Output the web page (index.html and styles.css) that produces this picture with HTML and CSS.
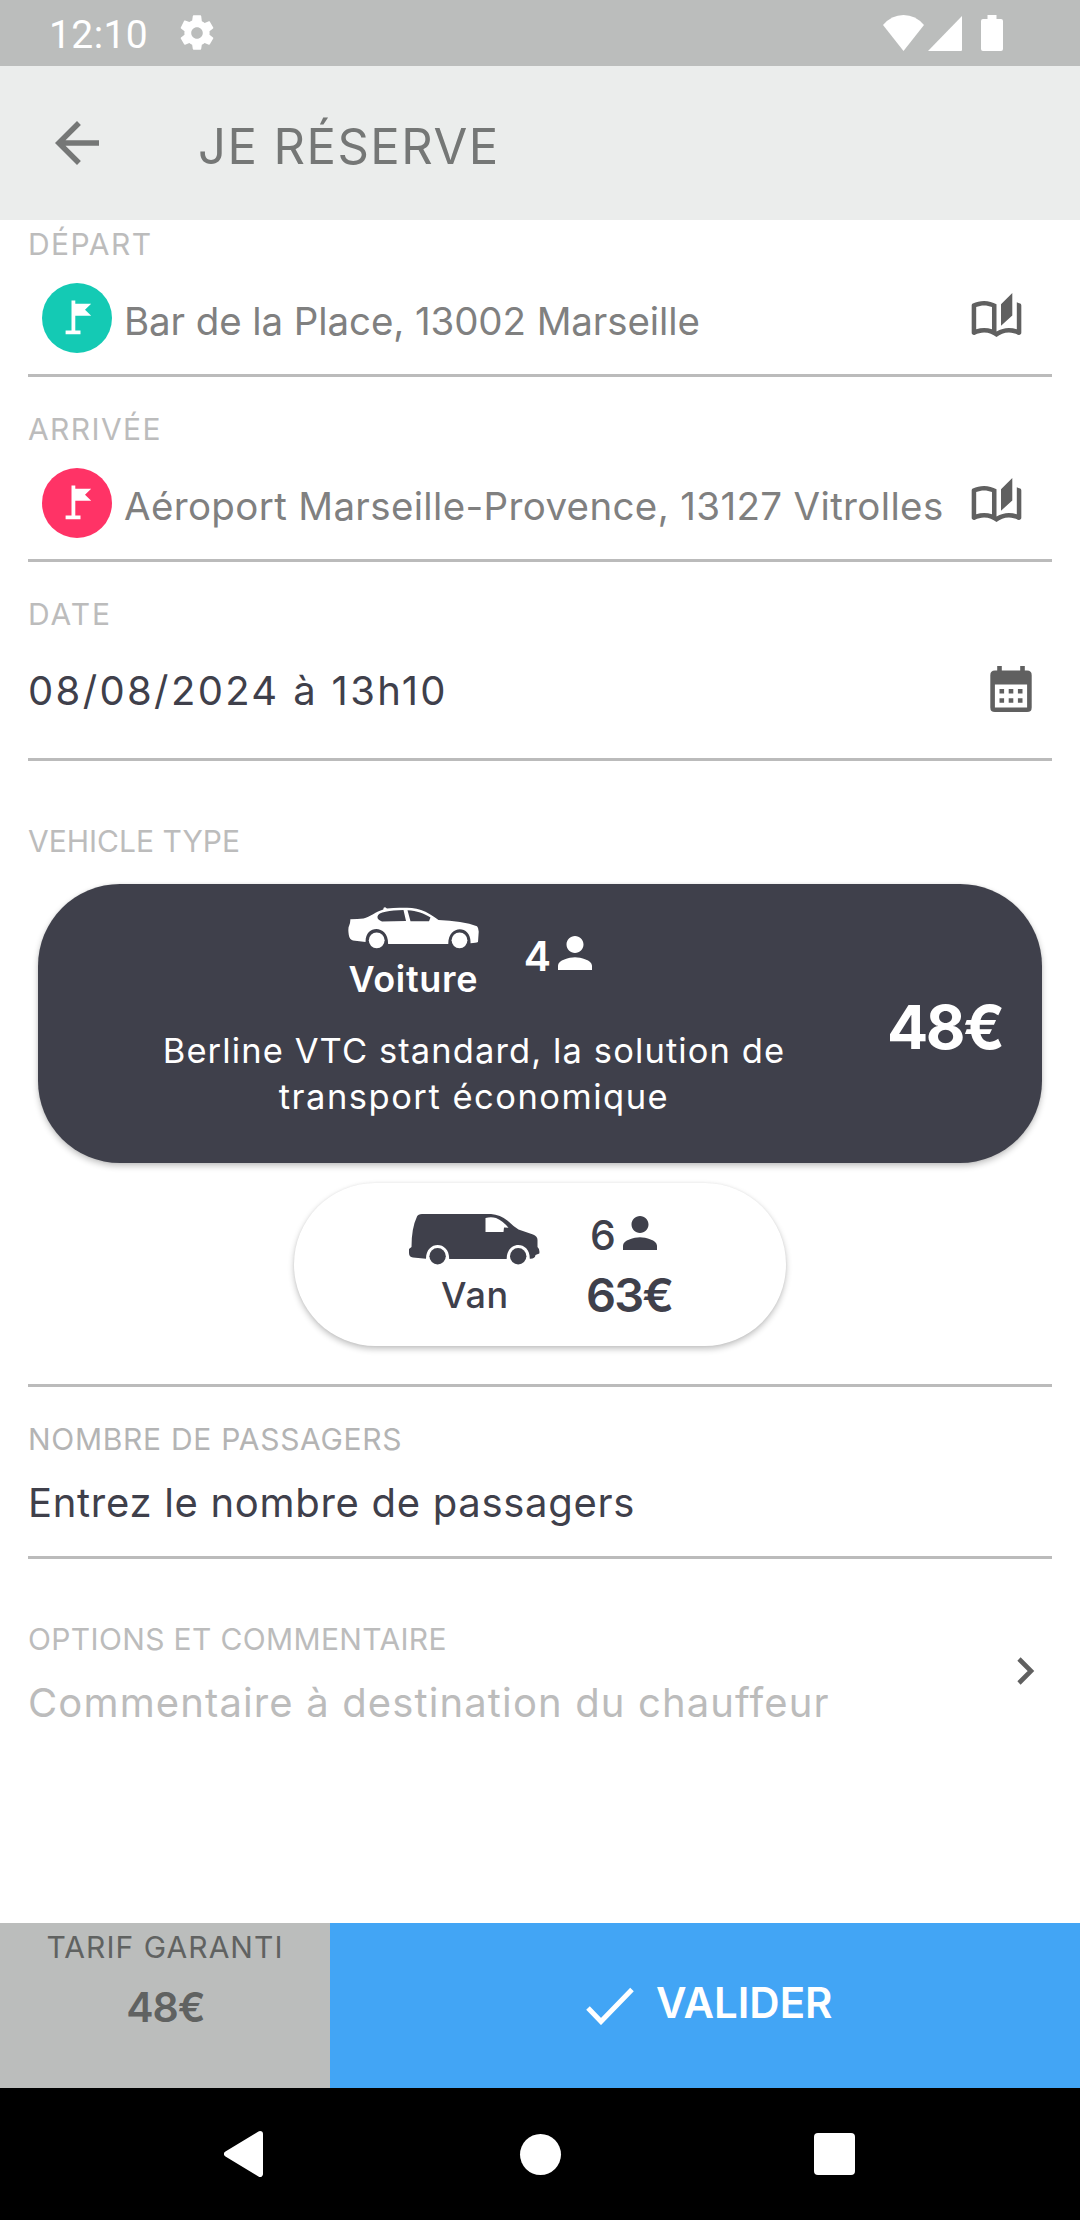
FILE: index.html
```html
<!DOCTYPE html>
<html lang="fr">
<head>
<meta charset="utf-8">
<title>Je réserve</title>
<link rel="stylesheet" href="styles.css">
</head>
<body>
<svg class="defs" width="0" height="0" aria-hidden="true">
  <symbol id="person" viewBox="4 4 16 16"><path d="M12 12c2.21 0 4-1.79 4-4s-1.79-4-4-4-4 1.79-4 4 1.79 4 4 4zm0 2c-2.67 0-8 1.34-8 4v2h16v-2c0-2.66-5.33-4-8-4z"/></symbol>
  <symbol id="book" viewBox="1 .5 22 19.5"><path d="M22.47 5.2c-.47-.24-.96-.44-1.47-.61v12.03c-1.14-.41-2.31-.62-3.5-.62-1.9 0-3.78.54-5.5 1.58V5.48C10.38 4.55 8.51 4 6.5 4c-1.79 0-3.48.44-4.97 1.2-.33.16-.53.51-.53.88v12.08c0 .58.47.99 1 .99.16 0 .32-.04.48-.12C3.69 18.4 5.05 18 6.5 18c2.07 0 3.98.82 5.5 2 1.52-1.18 3.43-2 5.5-2 1.45 0 2.81.4 4.02 1.04.16.08.32.12.48.12.52 0 1-.41 1-.99V6.08c0-.37-.2-.72-.53-.88zM10 16.62C8.86 16.21 7.69 16 6.5 16s-2.36.21-3.5.62V6.71C4.11 6.24 5.28 6 6.5 6c1.2 0 2.39.25 3.5.72v9.9zM19 .5l-5 5V15l5-4.5V.5z"/></symbol>
  <symbol id="flag" viewBox="-35 -35 70 70"><path d="M-5.5-17.5h3.8v3.2H14.2L8-8.2 14.2-2.3H-1.7V12.5H3.5v3.8H-11.4V12.5h5.9z"/></symbol>
</svg>

<header class="status">
  <span class="clock">12:10</span>
  <svg class="gear" width="42" height="42" viewBox="0 0 24 24"><path d="M19.14 12.94c.04-.3.06-.61.06-.94 0-.32-.02-.64-.07-.94l2.03-1.58c.18-.14.23-.41.12-.61l-1.92-3.32c-.12-.22-.37-.29-.59-.22l-2.39.96c-.5-.38-1.03-.7-1.62-.94L14.4 2.3c-.04-.24-.24-.41-.48-.41h-3.84c-.24 0-.43.17-.47.41l-.36 2.54c-.59.24-1.13.57-1.62.94l-2.39-.96c-.22-.08-.47 0-.59.22L2.74 8.87c-.12.21-.08.47.12.61l2.03 1.58c-.05.3-.09.63-.09.94s.02.64.07.94l-2.03 1.58c-.18.14-.23.41-.12.61l1.92 3.32c.12.22.37.29.59.22l2.39-.96c.5.38 1.03.7 1.62.94l.36 2.54c.05.24.24.41.48.41h3.84c.24 0 .44-.17.47-.41l.36-2.54c.59-.24 1.13-.56 1.62-.94l2.39.96c.22.08.47 0 .59-.22l1.92-3.32c.12-.22.07-.47-.12-.61l-2.01-1.58zM12 15.3c-1.82 0-3.3-1.48-3.3-3.3s1.48-3.3 3.3-3.3 3.3 1.48 3.3 3.3-1.48 3.3-3.3 3.3z"/></svg>
  <div class="signals">
    <svg width="41" height="36" viewBox="0 0 41 36"><path d="M0 10Q8.500 0 20.500 0T41 10L20.500 36z"/></svg>
    <svg class="cell" width="34" height="35" viewBox="0 0 34 35"><path d="M0 35L34 0V34Q34 35 33 35z"/></svg>
    <svg width="22" height="36" viewBox="0 0 22 36"><path d="M6.500 0h9v4H20q2 0 2 2V34q0 2-2 2H2q-2 0-2-2V6q0-2 2-2h4.500z"/></svg>
  </div>
</header>

<div class="appbar">
  <svg width="44" height="44" viewBox="4 4 16 16"><path d="M20 11H7.830l5.590-5.590L12 4l-8 8 8 8 1.410-1.410L7.830 13H20v-2z"/></svg>
  <h1 class="title">JE RÉSERVE</h1>
</div>

<main class="form">
  <section class="field">
    <div class="label">DÉPART</div>
    <div class="row">
      <svg class="pin pin-start"><use href="#flag"/></svg>
      <span class="address address-start">Bar de la Place, 13002 Marseille</span>
      <svg class="book"><use href="#book"/></svg>
    </div>
  </section>
  <section class="field">
    <div class="label arrival">ARRIVÉE</div>
    <div class="row">
      <svg class="pin pin-end"><use href="#flag"/></svg>
      <span class="address address-end">Aéroport Marseille-Provence, 13127 Vitrolles</span>
      <svg class="book"><use href="#book"/></svg>
    </div>
  </section>
  <section class="field">
    <div class="label date-label">DATE</div>
    <div class="row date-row">
      <span class="value date">08/08/2024 à 13h10</span>
      <svg class="calendar" width="42" height="46" viewBox="3 1 18 20"><path fill-rule="evenodd" d="M6 1h2v2h8V1h2v2h1q2 0 2 2v14q0 2-2 2H5q-2 0-2-2V5q0-2 2-2h1zM5 9v10h14V9zM7 11h2v2H7zM11 11h2v2h-2zM15 11h2v2h-2zM7 15h2v2H7zM11 15h2v2h-2zM15 15h2v2h-2z"/></svg>
    </div>
  </section>

  <section class="vehicles">
    <div class="label vehicle-label">VEHICLE TYPE</div>
    <div class="card selected">
      <div class="details">
        <div class="summary">
          <div class="model">
            <svg width="131" height="42" viewBox="0 0 131 42"><path fill-rule="evenodd" d="M2.300 12.300Q10 12.200 15.500 11.500C22 9.500 28 4.600 35.300 2.400Q35.200 0 37.200.2L39 1.500Q47 .6 54 .8C61 .8 67 1 73 2.900C79 4.800 85 9 90.500 13Q102 13.300 112 15Q122 16.500 129 19.300Q130.800 21 130.700 25L130 35Q128 36 122.500 36.200C123.500 17.500 100 17.500 100.300 36.900H40.100C40.500 17.500 17 17.500 17.600 35L5 33.500Q1.500 32.500.8 28Q-.3 21 1.200 18.500Q2.500 15 2.300 12.300zM29.500 9.500C30 5 42 3.200 55.500 3L58 14L34 14.500Q29 13 29.500 9.500zM59.500 3.200C69 3.500 76 6.500 82.500 10.500L81 14.300H62.500z"/><circle cx="28.700" cy="33.300" r="7.900"/><circle cx="111.500" cy="33.300" r="7.900"/></svg>
            <span class="name">Voiture</span>
          </div>
          <div class="pax"><span class="count">4</span><svg class="person"><use href="#person"/></svg></div>
        </div>
        <p class="description">Berline VTC standard, la solution de<br><span class="line-two">transport économique</span></p>
      </div>
      <div class="price">48€</div>
    </div>

    <div class="card van">
      <div class="model">
        <svg width="131" height="51" viewBox="0 0 131 51"><path fill-rule="evenodd" d="M13 0H82Q91 .5 99 7Q104 12 109.500 15.500L124 20.500Q128.500 22 128.500 26V33Q131 35 130.300 39.500L126.500 41Q126 45 120.800 44.700C121 26.500 97.500 26.500 97.700 45H40.200C40.500 26.500 17 26.500 17 44.700L4 43.500Q0 43 0 39V35L2.500 33Q2.500 14 8 2.500Q9 0 13 0zM76.500 4Q82 2.500 87 4Q94 7 99.500 13.800L95 13.500L94.500 18H76.500z"/><circle cx="28.600" cy="42.200" r="8.200"/><circle cx="109.200" cy="42.200" r="8.200"/></svg>
        <span class="name">Van</span>
      </div>
      <div class="offer">
        <div class="pax"><span class="count">6</span><svg class="person"><use href="#person"/></svg></div>
        <div class="van-price">63€</div>
      </div>
    </div>
  </section>

  <section class="field passengers">
    <div class="label passengers-label">NOMBRE DE PASSAGERS</div>
    <div class="row passengers-row"><span class="value">Entrez le nombre de passagers</span></div>
  </section>

  <section class="options">
    <div class="option-text">
      <div class="label options-label">OPTIONS ET COMMENTAIRE</div>
      <div class="placeholder">Commentaire à destination du chauffeur</div>
    </div>
    <svg class="chevron" width="18" height="28" viewBox="0 0 18 28"><path d="M2 2L14 14 2 26"/></svg>
  </section>
</main>

<footer class="actions">
  <div class="fare">
    <div class="fare-label">TARIF GARANTI</div>
    <div class="fare-value">48€</div>
  </div>
  <div class="submit">
    <svg width="48" height="38" viewBox="0 0 48 38"><path d="M2 21L15 34.500 46 2.500"/></svg>
    <span>VALIDER</span>
  </div>
</footer>

<nav class="navbar">
  <svg width="40" height="46" viewBox="0 0 40 46"><path d="M36 3L3 23 36 43z" stroke="#fff" stroke-width="6" stroke-linejoin="round"/></svg>
  <span class="home"></span>
  <span class="recents"></span>
</nav>
</body>
</html>
```
FILE: styles.css
```css
* { box-sizing: border-box; margin: 0; padding: 0; }

body {
  width: 1080px;
  height: 2220px;
  display: flex;
  flex-direction: column;
  background: #fff;
  color: #3f404b;
  font-family: Inter, "Open Sans", sans-serif;
  overflow: hidden;
}

svg { display: block; flex: none; fill: currentColor; }
.defs { position: absolute; }

.status {
  height: 66px;
  flex: none;
  display: flex;
  align-items: center;
  padding-left: 49px;
  background: #bbbdbc;
  color: #fff;
}
.clock {
  width: 127px;
  padding-top: 3px;
  font: 39px/46px Roboto, sans-serif;
  letter-spacing: .4px;
}
.signals { display: flex; align-items: center; margin-left: auto; margin-right: 77px; }
.cell { margin: 0 19px 0 4px; }

.appbar {
  height: 154px;
  flex: none;
  display: flex;
  align-items: center;
  gap: 99px;
  padding-left: 55px;
  background: #ebedec;
  color: #757776;
}
.title {
  padding-top: 8px;
  font-size: 49px;
  line-height: 58px;
  font-weight: 400;
  letter-spacing: 1.45px;
}

.form { flex: 1; padding: 6px 28px 0; }
.label {
  color: #bcbcbc;
  font-size: 30px;
  line-height: 36px;
  letter-spacing: 1.4px;
}
.date-label { letter-spacing: 1.95px; }
.vehicle-label { letter-spacing: 0; }
.passengers-label { letter-spacing: .7px; color: #b4b4b4; }
.options-label { letter-spacing: .35px; }

.field { margin-bottom: 34px; }
.row {
  height: 115px;
  display: flex;
  align-items: center;
  border-bottom: 3px solid #bbb;
}
.pin { width: 70px; height: 70px; margin-left: 14px; border-radius: 50%; color: #fff; }
.pin-start { background: #14cab4; }
.pin-end { background: #ff3366; }
.address {
  margin-left: 12px;
  padding-top: 5px;
  color: #808080;
  font-size: 38.5px;
  line-height: 48px;
  white-space: nowrap;
}
.address-start { letter-spacing: -.1px; }
.address-end { letter-spacing: .35px; }
.book { width: 51px; height: 44px; margin: 0 30px 7px auto; color: #606060; }

.value { font-size: 40px; line-height: 48px; letter-spacing: .7px; white-space: nowrap; }
.date-row { height: 129px; padding-bottom: 8px; }
.date { letter-spacing: 2.35px; }
.calendar { margin: 0 20px 5px auto; color: #606060; }

.vehicles {
  margin: 62px 0 34px;
  padding-bottom: 38px;
  border-bottom: 3px solid #bbb;
}
.card {
  display: flex;
  border-radius: 82px;
  box-shadow: 0 3px 6px rgba(0, 0, 0, .24), 0 0 3px rgba(0, 0, 0, .06);
}
.selected {
  height: 279px;
  margin: 25px 10px 0;
  padding: 23px 0 0 78px;
  background: #3f404b;
  color: #fff;
}
.details { width: 714px; }
.summary {
  display: flex;
  align-items: center;
  justify-content: center;
  gap: 45px;
  padding-right: 6px;
}
.model { display: flex; flex-direction: column; align-items: center; gap: 10px; }
.name { font-size: 36px; line-height: 40px; font-weight: 600; letter-spacing: .7px; }
.pax { display: flex; align-items: center; gap: 7px; }
.count { font-size: 41px; line-height: 40px; font-weight: 600; }
.person { width: 34px; height: 34px; }
.summary .count { padding-top: 6px; }
.description {
  margin-top: 29px;
  padding-left: 2px;
  text-align: center;
  font-size: 34.5px;
  line-height: 46px;
  letter-spacing: 1.1px;
}
.line-two { letter-spacing: 1.5px; }
.price {
  margin: -23px 0 0 57px;
  padding-top: 4px;
  line-height: 279px;
  font-size: 61px;
  font-weight: 700;
  letter-spacing: -2.4px;
}

.van {
  width: 492px;
  height: 163px;
  margin: 20px auto 0;
  padding: 31px 0 0 115px;
  gap: 46px;
}
.van .model { gap: 10px; }
.van .name { font-weight: 500; padding-left: 1px; }
.van .count { font-weight: 500; }
.van .pax { padding: 1px 0 0 4px; }
.van .person { margin-bottom: 4px; }
.van-price {
  margin-top: 15px;
  font-size: 47px;
  line-height: 50px;
  font-weight: 600;
  letter-spacing: -1.8px;
}

.passengers-row { height: 102px; padding-bottom: 7px; }
.options { margin-top: 62px; display: flex; align-items: center; }
.placeholder {
  margin-top: 22px;
  color: #bcbcbc;
  font-size: 40px;
  line-height: 48px;
  letter-spacing: 1.13px;
}
.chevron {
  margin: 0 17px 7px auto;
  fill: none;
  stroke: #606060;
  stroke-width: 4.6;
}

.actions { height: 165px; flex: none; display: flex; }
.fare { width: 330px; padding-top: 6px; background: #bbbdbc; color: #606261; text-align: center; }
.fare-label { font-size: 30px; line-height: 36px; letter-spacing: 1.05px; }
.fare-value {
  margin-top: 18px;
  padding-left: 1px;
  font-size: 41px;
  line-height: 48px;
  font-weight: 600;
  letter-spacing: -1px;
}
.submit {
  flex: 1;
  display: flex;
  align-items: center;
  gap: 22px;
  padding-left: 256px;
  background: #42a5f5;
  color: #fff;
  font-size: 42px;
  line-height: 50px;
  font-weight: 600;
  letter-spacing: 0;
}
.submit span { padding-bottom: 6px; }
.submit svg { fill: none; stroke: #fff; stroke-width: 5; }

.navbar {
  height: 132px;
  flex: none;
  display: flex;
  align-items: center;
  padding-left: 224px;
  background: #000;
  color: #fff;
}
.home { width: 41px; height: 41px; margin-left: 256px; border-radius: 50%; background: #fff; }
.recents { width: 41px; height: 42px; margin-left: 253px; border-radius: 4px; background: #fff; }
```
